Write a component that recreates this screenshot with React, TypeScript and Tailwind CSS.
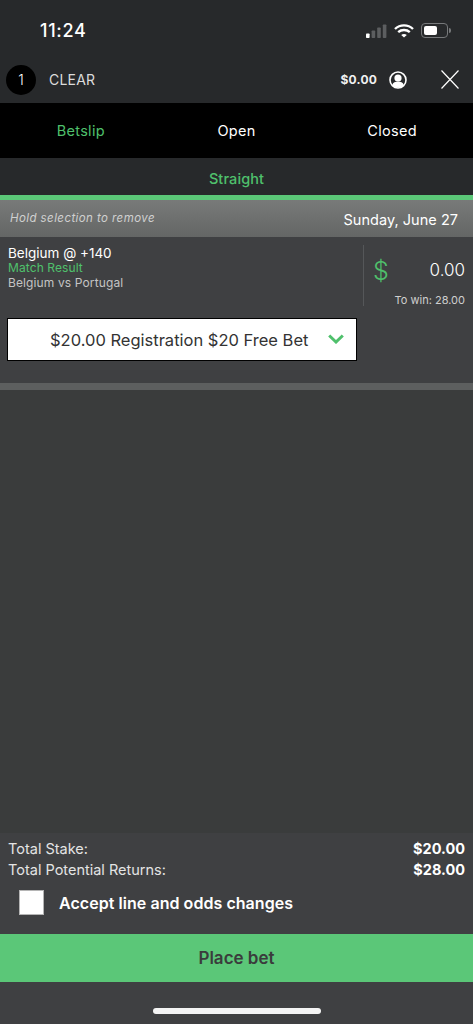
const font = { fontFamily: 'Inter, "Liberation Sans", sans-serif' };

function StatusIcons() {
  return (
    <div className="flex items-center">
      {/* signal */}
      <svg width="21" height="14" viewBox="0 0 21 14" className="mr-[7px]">
        <rect x="0" y="9.5" width="3.6" height="4.5" rx="0.8" fill="#fff" />
        <rect x="5.6" y="6.5" width="3.6" height="7.5" rx="0.8" fill="#5c5e60" />
        <rect x="11.2" y="3.5" width="3.6" height="10.5" rx="0.8" fill="#5c5e60" />
        <rect x="16.8" y="0.5" width="3.6" height="13.5" rx="0.8" fill="#5c5e60" />
      </svg>
      {/* wifi */}
      <svg width="20" height="14" viewBox="0 0 20 14" className="mr-[7px]" fill="none" stroke="#fff" strokeWidth="2.4">
        <path d="M1 5 C6 0.2 14 0.2 19 5" />
        <path d="M4.2 8.2 C7.4 5.3 12.6 5.3 15.8 8.2" />
        <path d="M10 13.6 L7.2 10.9 C8.8 9.6 11.2 9.6 12.8 10.9 Z" fill="#fff" stroke="none" />
      </svg>
      {/* battery */}
      <div className="flex items-center">
        <div className="w-[27px] h-[15px] rounded-[4px] border border-[#77797b] p-[2px]">
          <div className="w-[13px] h-full bg-white rounded-[2px]" />
        </div>
        <div className="w-[2px] h-[5px] bg-[#77797b] rounded-r-sm ml-[1px]" />
      </div>
    </div>
  );
}

export default function App() {
  return (
    <div className="w-[473px] h-[1024px] flex flex-col bg-[#3a3c3c] overflow-hidden" style={font}>
      {/* Status bar */}
      <div className="h-[60px] bg-[#27292b] flex items-center justify-between pl-[40px] pr-[22px] pt-[1px]">
        <span className="text-[18px] font-medium text-white tracking-[0.7px]">11:24</span>
        <StatusIcons />
      </div>

      {/* Header */}
      <div className="h-[43px] bg-[#27292b] flex items-center pl-[6px] pr-[14px] pb-[4px]">
        <div className="w-[30px] h-[30px] rounded-full bg-black flex items-center justify-center text-[14px] font-light text-white">1</div>
        <span className="ml-[13px] text-[14px] text-[#dcdcdc] tracking-[0.2px]">CLEAR</span>
        <span className="ml-auto text-[12px] font-bold text-[#f0f0f0] tracking-[0.2px]">$0.00</span>
        <svg width="18" height="18" viewBox="0 0 18 18" className="ml-[12px]">
          <circle cx="9" cy="9" r="8" fill="none" stroke="#fff" strokeWidth="1.6" />
          <circle cx="9" cy="7" r="3.6" fill="#fff" />
          <path d="M3.2 14.2 C4 11.4 6.4 10.6 9 10.6 C11.6 10.6 14 11.4 14.8 14.2 C13.2 16 11 16.6 9 16.6 C7 16.6 4.8 16 3.2 14.2 Z" fill="#fff" />
        </svg>
        <svg width="18" height="19" viewBox="0 0 18 19" className="ml-[34px]" stroke="#fff" strokeWidth="1.2">
          <path d="M0.5 0.5 L17.5 18.5 M17.5 0.5 L0.5 18.5" />
        </svg>
      </div>

      {/* Tabs */}
      <div className="h-[55px] bg-black grid grid-cols-3 items-center text-center text-[14.5px] tracking-[0.3px]">
        <span className="text-[#4fc06c] pl-[4px]">Betslip</span>
        <span className="text-white">Open</span>
        <span className="text-white pr-[4px]">Closed</span>
      </div>

      {/* Sub tab */}
      <div className="h-[37px] bg-[#27292b] flex items-center justify-center pt-[5px] text-[14.5px] font-medium tracking-[0.1px] text-[#4fc06c]">
        Straight
      </div>
      <div className="h-[5px] bg-[#5bc778]" />

      {/* Date row */}
      <div className="h-[37px] bg-gradient-to-b from-[#787a79] to-[#646665] flex items-center justify-between pl-[10px] pr-[15px]">
        <span className="text-[11.5px] italic text-[#d0d0d0] tracking-[0.42px]">Hold selection to remove</span>
        <span className="text-[14.5px] text-white tracking-[0.03px] pt-[2px]">Sunday, June 27</span>
      </div>

      {/* Selection */}
      <div className="h-[146px] bg-[#3f4042] px-[7px]">
        <div className="flex h-[81px] pt-[9px]">
          <div className="flex-1 pl-[1px] flex flex-col">
            <span className="text-[13.5px] leading-[14px] text-white">Belgium @ +140</span>
            <span className="text-[12px] leading-[15px] text-[#4fc06c] tracking-[0.1px]">Match Result</span>
            <span className="text-[12px] leading-[15px] text-[#c4c4c4] tracking-[0.12px]">Belgium vs Portugal</span>
          </div>
          <div className="w-[103px] border-l border-[#555759] flex flex-col pr-[1px] h-[61px] -mt-[1px]">
            <div className="flex items-center justify-between pl-[9px] mt-[11px]">
              <span className="text-[25px] leading-[30px] font-light text-[#4fc06c]">$</span>
              <span className="text-[17px] text-white font-light">0.00</span>
            </div>
            <span className="mt-[7px] self-end text-[11px] leading-[14px] text-[#cfcfcf]">To win: 28.00</span>
          </div>
        </div>
        <div className="w-[350px] h-[43px] bg-white border border-black flex items-center pl-[42px] pr-[12px] pt-[2px]">
          <span className="text-[16.5px] text-[#333]">$20.00 Registration $20 Free Bet</span>
          <svg width="16" height="10" viewBox="0 0 16 10" className="ml-auto mb-[3px]" fill="none" stroke="#4fc06c" strokeWidth="3">
            <path d="M1.2 1.5 L8 8 L14.8 1.5" />
          </svg>
        </div>
      </div>
      <div className="h-[7px] bg-[#5d5f5f]" />

      {/* Empty area */}
      <div className="flex-1 bg-[#3a3c3c]" />

      {/* Footer */}
      <div className="h-[191px] bg-[#3f4042] flex flex-col pt-[5px]">
        <div className="pl-[8px] pr-[8px] flex justify-between items-center h-[21px] text-[14.5px] text-[#e4e4e4]">
          <span>Total Stake:</span>
          <span className="font-bold text-white">$20.00</span>
        </div>
        <div className="pl-[8px] pr-[8px] flex justify-between items-center h-[21px] text-[14.5px] text-[#e4e4e4]">
          <span>Total Potential Returns:</span>
          <span className="font-bold text-white">$28.00</span>
        </div>
        <div className="flex items-center pl-[19px] mt-[10px]">
          <div className="w-[25px] h-[25px] bg-white border border-[#b5b5b5]" />
          <span className="ml-[15px] pt-[1px] text-[16px] font-semibold text-white tracking-[0.05px]">Accept line and odds changes</span>
        </div>
        <div className="mt-[19px] h-[48px] bg-[#5bc778] flex items-center justify-center pt-[2px] text-[17px] font-semibold text-[#3a3c3c]">
          Place bet
        </div>
        <div className="flex-1 flex justify-center pt-[26px]">
          <div className="w-[168px] h-[6px] rounded-full bg-[#f4f4f4]" />
        </div>
      </div>
    </div>
  );
}
